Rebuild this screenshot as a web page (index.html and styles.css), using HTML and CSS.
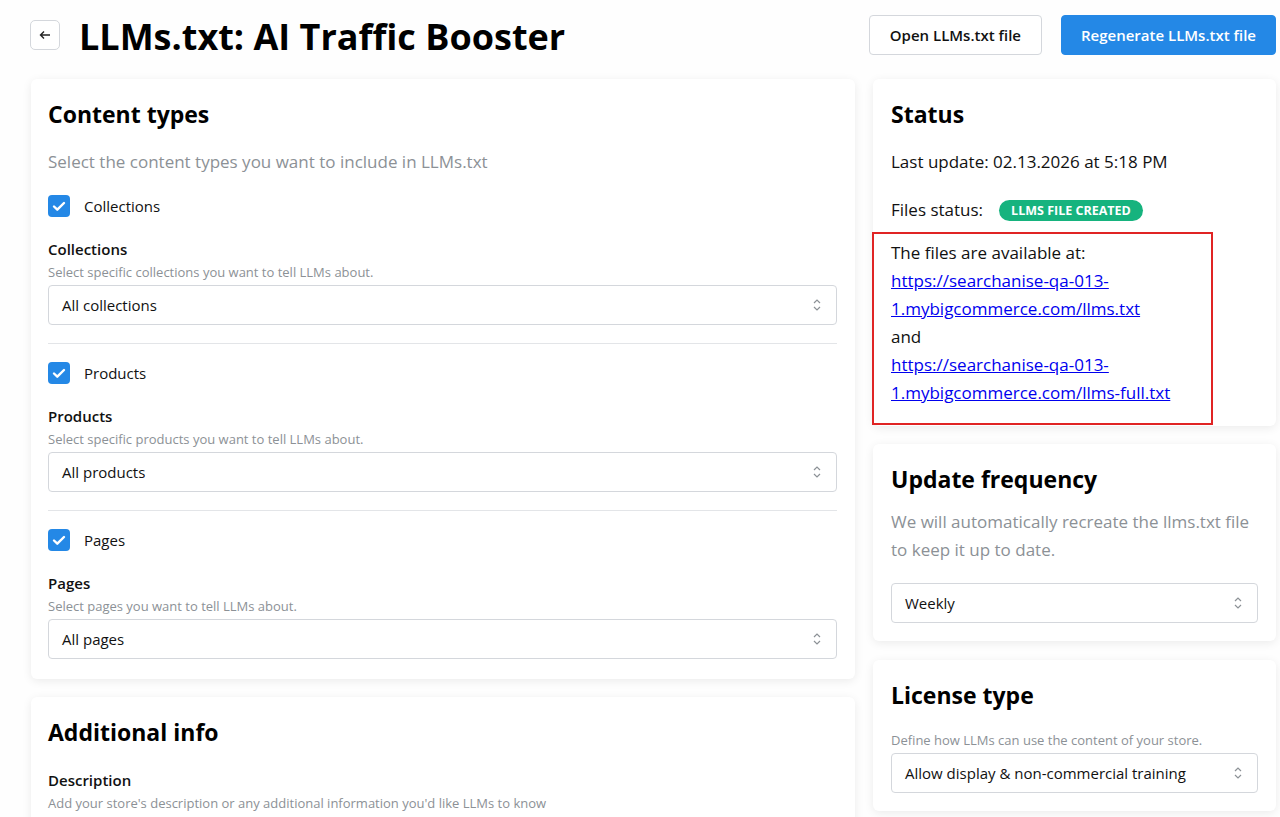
FILE: index.html
```html
<!DOCTYPE html>
<html>
  <head>
    <meta charset="UTF-8" />
    <title>LLMs.txt: AI Traffic Booster</title>
    <link rel="stylesheet" href="styles.css">
  </head>
  <body>
    <div class="page">
      <header class="page-header">
        <button class="back-btn" aria-label="Back">
          <svg width="12" height="12" viewBox="0 0 12 12">
            <path d="M11 6H1.5M5 2.5L1.5 6 5 9.5" fill="none" stroke="#222" stroke-width="1.4" />
          </svg>
        </button>
        <h1 class="page-title">LLMs.txt: AI Traffic Booster</h1>
        <div class="header-actions">
          <button class="btn">Open LLMs.txt file</button>
          <button class="btn btn-primary">Regenerate LLMs.txt file</button>
        </div>
      </header>

      <div class="layout">
        <div class="column">
          <!-- Content types -->
          <section class="card card--wide">
            <h2 class="card-title">Content types</h2>
            <p class="card-subtitle card-subtitle--lead">Select the content types you want to include in LLMs.txt</p>

            <div class="type-block">
              <label class="check">
                <span class="check-box"></span>
                Collections
              </label>
              <div class="field">
                <div class="field-label">Collections</div>
                <div class="field-help">Select specific collections you want to tell LLMs about.</div>
                <div class="select">All collections<span class="select-arrows"></span></div>
              </div>
            </div>

            <div class="type-block">
              <label class="check">
                <span class="check-box"></span>
                Products
              </label>
              <div class="field">
                <div class="field-label">Products</div>
                <div class="field-help">Select specific products you want to tell LLMs about.</div>
                <div class="select">All products<span class="select-arrows"></span></div>
              </div>
            </div>

            <div class="type-block">
              <label class="check">
                <span class="check-box"></span>
                Pages
              </label>
              <div class="field">
                <div class="field-label">Pages</div>
                <div class="field-help">Select pages you want to tell LLMs about.</div>
                <div class="select">All pages<span class="select-arrows"></span></div>
              </div>
            </div>
          </section>

          <!-- Additional info -->
          <section class="card card--wide">
            <h2 class="card-title">Additional info</h2>
            <div class="field field--spaced">
              <div class="field-label">Description</div>
              <div class="field-help">Add your store's description or any additional information you'd like LLMs to know</div>
              <div class="textarea"></div>
            </div>
          </section>
        </div>

        <div class="column">
          <!-- Status -->
          <section class="card card--status">
            <h2 class="card-title">Status</h2>
            <p class="status-line">Last update: 02.13.2026 at 5:18 PM</p>
            <p class="status-line">Files status: <span class="badge">LLMS FILE CREATED</span></p>
            <div class="files-box">
              The files are available at:<br>
              <a href="#">https://searchanise-qa-013-1.mybigcommerce.com/llms.txt</a><br>
              and<br>
              <a href="#">https://searchanise-qa-013-1.mybigcommerce.com/llms-full.txt</a>
            </div>
          </section>

          <!-- Update frequency -->
          <section class="card">
            <h2 class="card-title">Update frequency</h2>
            <p class="card-subtitle">We will automatically recreate the llms.txt file to keep it up to date.</p>
            <div class="select">Weekly<span class="select-arrows"></span></div>
          </section>

          <!-- License type -->
          <section class="card card--license">
            <h2 class="card-title">License type</h2>
            <div class="field">
              <div class="field-help">Define how LLMs can use the content of your store.</div>
              <div class="select">Allow display &amp; non-commercial training<span class="select-arrows"></span></div>
            </div>
          </section>
        </div>
      </div>
    </div>
  </body>
</html>
```

FILE: styles.css
```css
* {
  margin: 0;
  padding: 0;
  box-sizing: border-box;
}

body {
  font-family: "Open Sans", "Noto Sans", Arial, sans-serif;
  background: #fefefe;
  color: #111;
}

.page {
  padding: 15px 4px 0 31px;
}

/* Header */
.page-header {
  display: flex;
  align-items: center;
  height: 40px;
  margin-bottom: 24px;
}

.back-btn {
  width: 30px;
  height: 30px;
  margin-left: -1px;
  border: 1px solid #d4d7dc;
  border-radius: 5px;
  background: #fff;
  display: flex;
  align-items: center;
  justify-content: center;
  margin-right: 19px;
}

.page-title {
  font-size: 36px;
  font-weight: 700;
  color: #000;
  margin-top: 2px;
}

.header-actions {
  margin-left: auto;
  display: flex;
  gap: 19px;
}

.btn {
  height: 40px;
  padding: 0 20px;
  border: 1px solid #d4d7dc;
  border-radius: 4px;
  background: #fff;
  font-family: inherit;
  font-size: 15px;
  font-weight: 600;
  color: #111;
}

.btn-primary {
  background: #2488e6;
  border-color: #2488e6;
  color: #fff;
  padding: 0 19px;
}

/* Layout */
.layout {
  display: grid;
  grid-template-columns: 824px 403px;
  gap: 18px;
  align-items: start;
}

.column {
  display: flex;
  flex-direction: column;
  gap: 18px;
}

.card {
  background: #fff;
  border-radius: 6px;
  box-shadow: 0 2px 10px rgba(0, 0, 0, 0.08);
  padding: 19px 18px 18px;
}

.card--wide {
  padding-left: 17px;
  padding-bottom: 20px;
}

.card--status {
  padding-bottom: 1px;
}

.card--license {
  margin-top: 1px;
}

.card-title {
  font-size: 23px;
  font-weight: 700;
  color: #000;
  line-height: 32px;
  margin-bottom: 13px;
}

.card-subtitle {
  font-size: 17px;
  color: #8c9196;
  line-height: 28px;
  margin-bottom: 19px;
}

.card-subtitle--lead {
  margin-top: 18px;
}

/* Content type blocks */
.type-block {
  padding-bottom: 18px;
  border-bottom: 1px solid #e3e5e8;
  margin-bottom: 18px;
}

.type-block:last-child {
  border-bottom: none;
  margin-bottom: 0;
  padding-bottom: 0;
}

.check {
  display: flex;
  align-items: center;
  gap: 14px;
  font-size: 15px;
  line-height: 22px;
  margin-bottom: 21px;
}

.check-box {
  width: 22px;
  height: 22px;
  border-radius: 4px;
  background: #2488e6 url("data:image/svg+xml,%3Csvg xmlns='http://www.w3.org/2000/svg' viewBox='0 0 22 22'%3E%3Cpath d='M6 11.5l3.3 3.2L16 8' fill='none' stroke='white' stroke-width='2.4' stroke-linecap='round' stroke-linejoin='round'/%3E%3C/svg%3E") center / 22px no-repeat;
}

.card-title + .field {
  margin-top: 19px;
}

.card-title + .field--spaced {
  margin-top: 21px;
}

.field-label {
  font-size: 15px;
  font-weight: 600;
  line-height: 22px;
  margin-bottom: 2px;
}

.field-help {
  font-size: 13px;
  color: #8c9196;
  line-height: 20px;
  margin-bottom: 3px;
}

.select {
  position: relative;
  height: 40px;
  border: 1px solid #d4d7dc;
  border-radius: 4px;
  padding: 0 13px;
  display: flex;
  align-items: center;
  font-size: 15px;
  color: #111;
}

.select-arrows {
  position: absolute;
  right: 14px;
  top: 12px;
  width: 10px;
  height: 14px;
  background: url("data:image/svg+xml,%3Csvg xmlns='http://www.w3.org/2000/svg' viewBox='0 0 10 14'%3E%3Cpath d='M2 5l3-3 3 3M2 9l3 3 3-3' fill='none' stroke='%238c9196' stroke-width='1.2'/%3E%3C/svg%3E") center / 10px 14px no-repeat;
}

.textarea {
  height: 80px;
  margin-top: 6px;
  border: 1px solid #d4d7dc;
  border-radius: 4px;
}

/* Status */
.status-line {
  font-size: 17px;
  line-height: 28px;
  margin-bottom: 20px;
  display: flex;
  align-items: center;
}

.card-title + .status-line {
  margin-top: 18px;
}

.badge {
  margin-left: 16px;
  background: #16b37e;
  color: #fff;
  font-size: 12.5px;
  font-weight: 700;
  line-height: 21px;
  padding: 0 12px;
  border-radius: 11px;
}

.files-box {
  margin: -12px 45px 0 -19px;
  border: 2px solid #e02424;
  padding: 5px 17px 16px;
  font-size: 17px;
  line-height: 28px;
}

.files-box a {
  color: #0000ee;
}
```
